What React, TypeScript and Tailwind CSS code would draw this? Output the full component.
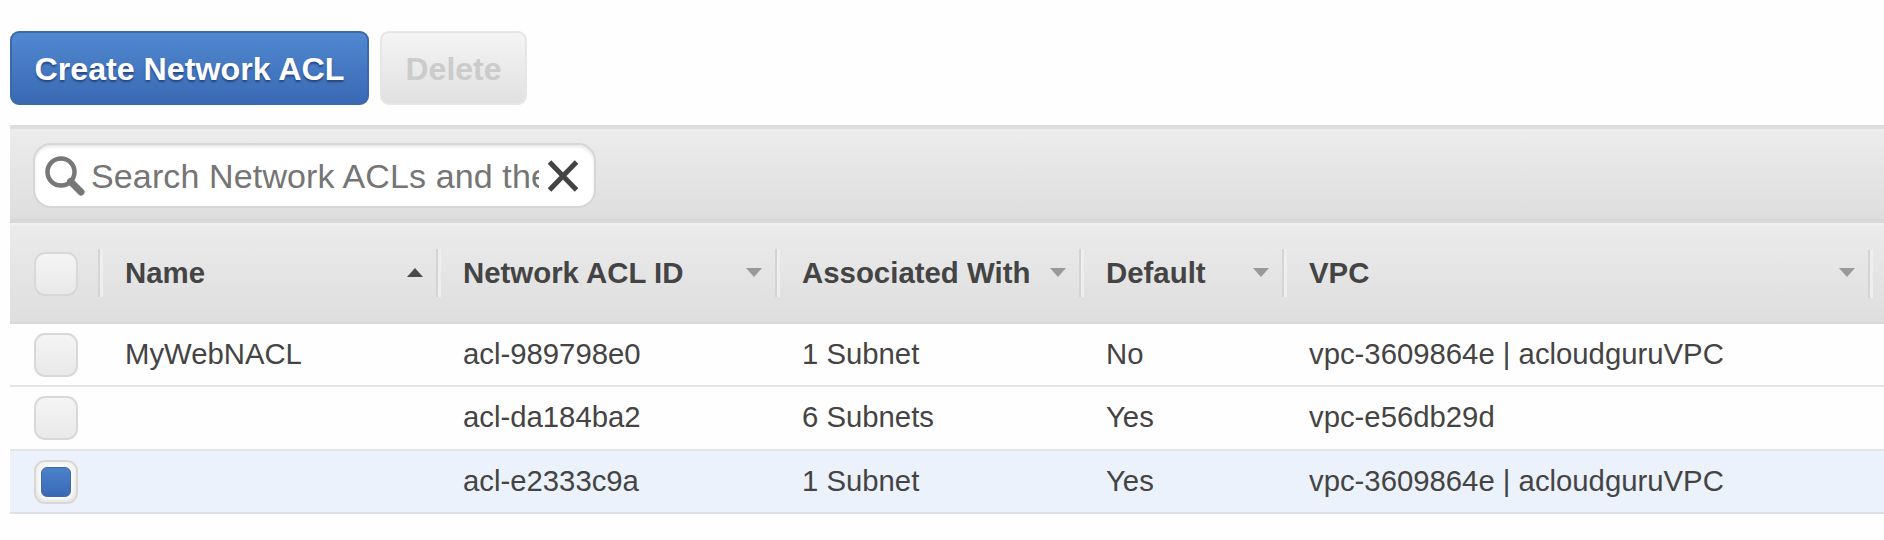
import React from "react";

type Column = { label: string; width: string; sort: "asc" | "none" };

const columns: Column[] = [
  { label: "Name", width: "w-[338px]", sort: "asc" },
  { label: "Network ACL ID", width: "w-[339px]", sort: "none" },
  { label: "Associated With", width: "w-[304px]", sort: "none" },
  { label: "Default", width: "w-[203px]", sort: "none" },
  { label: "VPC", width: "w-[586px]", sort: "none" },
];

const rows = [
  { cells: ["MyWebNACL", "acl-989798e0", "1 Subnet", "No", "vpc-3609864e | acloudguruVPC"], height: "h-[63px]", selected: false },
  { cells: ["", "acl-da184ba2", "6 Subnets", "Yes", "vpc-e56db29d"], height: "h-[64px]", selected: false },
  { cells: ["", "acl-e2333c9a", "1 Subnet", "Yes", "vpc-3609864e | acloudguruVPC"], height: "h-[63px]", selected: true },
];

function Checkbox({ checked = false }: { checked?: boolean }) {
  return (
    <span
      role="checkbox"
      aria-checked={checked}
      className="flex size-11 shrink-0 items-center justify-center rounded-[11px] border-2 border-[#d8d8d8] bg-linear-to-b from-[#f4f4f4] to-[#e9e9e9]"
    >
      {checked && (
        <span className="size-[30px] rounded-md border border-[#3c69ad] bg-linear-to-b from-[#4b83cb] to-[#3a69b4] shadow-[0_0_3px_2px_#ffffff]" />
      )}
    </span>
  );
}

function SortArrow({ sort }: { sort: Column["sort"] }) {
  return sort === "asc" ? (
    <svg width="16" height="9" viewBox="0 0 16 9" className="fill-[#4a4a4a]">
      <path d="M8 0 16 9H0Z" />
    </svg>
  ) : (
    <svg width="16" height="9" viewBox="0 0 16 9" className="fill-[#999999]">
      <path d="M0 0H16L8 9Z" />
    </svg>
  );
}

function Divider() {
  return <span className="h-12 w-[5px] shrink-0 border-l-2 border-r-3 border-l-[#d4d4d4] border-r-[#eeeeee]" />;
}

export default function App() {
  return (
    <div className="h-[540px] w-full overflow-hidden bg-[#fefefe] pl-2.5 pt-[31px] font-['Liberation_Sans',Arial,sans-serif] text-[#444444]">
      <div className="flex gap-[11px]">
        <button className="h-[74px] w-[359px] rounded-[9px] border-2 border-[#3b69ae] bg-linear-to-b from-[#5189d1] to-[#3a69b4] pt-0.5 text-[32.2px] font-bold whitespace-nowrap text-white [text-shadow:0_2px_2px_#24477f]">
          Create Network ACL
        </button>
        <button className="h-[74px] w-[147px] rounded-[9px] border-2 border-[#e6e6e6] bg-linear-to-b from-[#f4f4f4] to-[#e1e1e1] pt-0.5 text-[32px] font-bold text-[#cbcbcb]">
          Delete
        </button>
      </div>

      <div className="mt-5 flex h-[98px] items-start border-t-4 border-b-4 border-t-[#dedede] border-b-[#d8d8d8] bg-linear-to-b from-[#ececec] to-[#dedede] pl-[23px] pt-3.5">
        <div className="flex h-[65px] w-[563px] items-center rounded-[18px] border-2 border-[#d6d6d6] bg-white pl-2.5 shadow-[inset_0_2px_3px_#e8e8e8]">
          <svg width="40" height="40" viewBox="0 0 40 40" fill="none" className="shrink-0 stroke-[#777777]">
            <circle cx="16" cy="16" r="13.5" strokeWidth="4.5" />
            <path d="M25.500 25.500 36 36" strokeWidth="7" strokeLinecap="round" />
          </svg>
          <span className="ml-1.5 w-[448px] overflow-hidden text-[34px] leading-[44px] tracking-[0.13px] whitespace-nowrap text-[#757575]">
            Search Network ACLs and their
          </span>
          <svg width="32" height="32" viewBox="0 0 32 32" fill="none" className="ml-2 shrink-0 stroke-[#444444]">
            <path d="M2.500 2 29.500 30M29.500 2 2.500 30" strokeWidth="5" />
          </svg>
        </div>
      </div>

      <div className="flex h-[101px] items-center border-t-3 border-b-2 border-t-[#f0f0f0] border-b-[#d8d8d8] bg-linear-to-b from-[#ebebeb] to-[#dedede] pl-6">
        <Checkbox />
        <span className="w-5 shrink-0" />
        {columns.map((column) => (
          <div key={column.label} className={`flex shrink-0 items-center pb-0.5 ${column.width}`}>
            <Divider />
            <span className="ml-[22px] grow text-[29.400px] font-bold whitespace-nowrap">{column.label}</span>
            <span className="mr-[13px] pb-px">
              <SortArrow sort={column.sort} />
            </span>
          </div>
        ))}
        <Divider />
      </div>

      {rows.map((row, index) => (
        <div
          key={index}
          className={`flex items-center border-b-2 pl-6 ${row.height} ${
            row.selected ? "border-[#dde2e8] bg-[#ebf2fb]" : "border-[#e4e4e4]"
          }`}
        >
          <Checkbox checked={row.selected} />
          <span className="w-5 shrink-0" />
          {row.cells.map((cell, i) => (
            <span key={i} className={`shrink-0 pb-0.5 pl-[27px] text-[29.300px] whitespace-nowrap ${columns[i].width}`}>
              {cell}
            </span>
          ))}
        </div>
      ))}
    </div>
  );
}
